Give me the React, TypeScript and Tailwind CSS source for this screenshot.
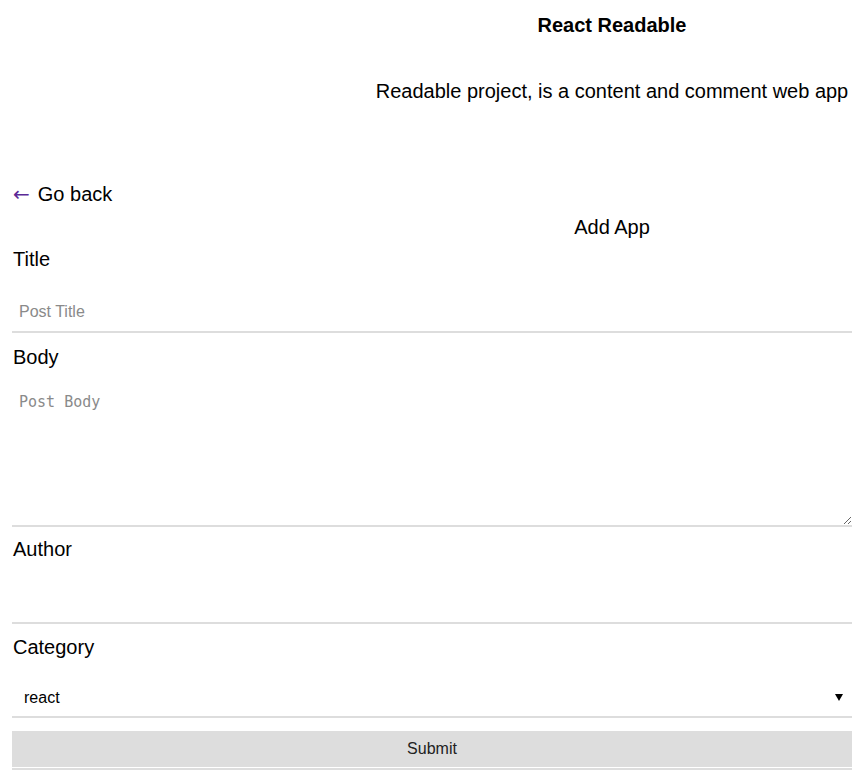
import React from "react";

const App: React.FC = () => {
  return (
    <div className="w-[862px] min-h-[778px] bg-white text-black font-['Liberation_Sans',Arial,sans-serif]">
      {/* Header */}
      <div className="flex">
        <div className="w-[362px] shrink-0" />
        <div className="flex-1 text-center">
          <div className="h-[50px] flex items-center justify-center">
            <h1 className="text-[20px] font-bold">React Readable</h1>
          </div>
          <div className="h-[82px] flex items-center justify-center">
            <p className="text-[20px]">Readable project, is a content and comment web app</p>
          </div>
        </div>
      </div>

      <div className="h-[46px]" />

      {/* Go back */}
      <div className="h-[32px] flex items-center pl-[13px] text-[20px]">
        <a href="#" className="flex items-center gap-[8px]">
          <span className="text-[#5b2a96] text-[20px] leading-none font-['DejaVu_Sans',sans-serif]">←</span>
          <span className="text-black">Go back</span>
        </a>
      </div>

      {/* Page title */}
      <div className="flex">
        <div className="w-[362px] shrink-0" />
        <div className="flex-1 h-[34px] flex items-center justify-center text-[20px]">Add App</div>
      </div>

      {/* Form */}
      <form className="flex flex-col pl-[12px] pr-[10px]">
        <label className="h-[30px] flex items-center pl-[1px] text-[20px]">Title</label>
        <input
          type="text"
          placeholder="Post Title"
          className="h-[59px] pt-[18px] px-[7px] text-[16px] border-b-2 border-[#dddddd] outline-none placeholder:text-[#8a8a8a]"
        />

        <label className="h-[48px] flex items-center pl-[1px] text-[20px]">Body</label>
        <textarea
          placeholder="Post Body"
          className="h-[146px] pt-[12px] px-[7px] text-[15px] leading-[18px] font-['DejaVu_Sans_Mono',monospace] border-b-2 border-[#dddddd] outline-none placeholder:text-[#8a8a8a]"
        />

        <label className="h-[44px] flex items-center pl-[1px] text-[20px]">Author</label>
        <input
          type="text"
          className="h-[53px] px-[7px] text-[16px] border-b-2 border-[#dddddd] outline-none"
        />

        <label className="h-[46px] flex items-center pl-[1px] text-[20px]">Category</label>
        <div className="relative">
          <select className="w-full h-[48px] pt-[10px] pl-[12px] text-[16px] appearance-none bg-white border-b-2 border-[#dddddd] outline-none">
            <option value="react">react</option>
            <option value="redux">redux</option>
            <option value="udacity">udacity</option>
          </select>
          <span className="absolute right-[9px] top-[24px] w-0 h-0 border-l-[4px] border-r-[4px] border-t-[7px] border-l-transparent border-r-transparent border-t-black pointer-events-none" />
        </div>

        <div className="mt-[13px] pb-[1px] border-b-2 border-[#dddddd]">
          <button type="submit" className="w-full h-[36px] bg-[#dddddd] text-[16px] text-[#222]">
            Submit
          </button>
        </div>
      </form>
    </div>
  );
};

export default App;
